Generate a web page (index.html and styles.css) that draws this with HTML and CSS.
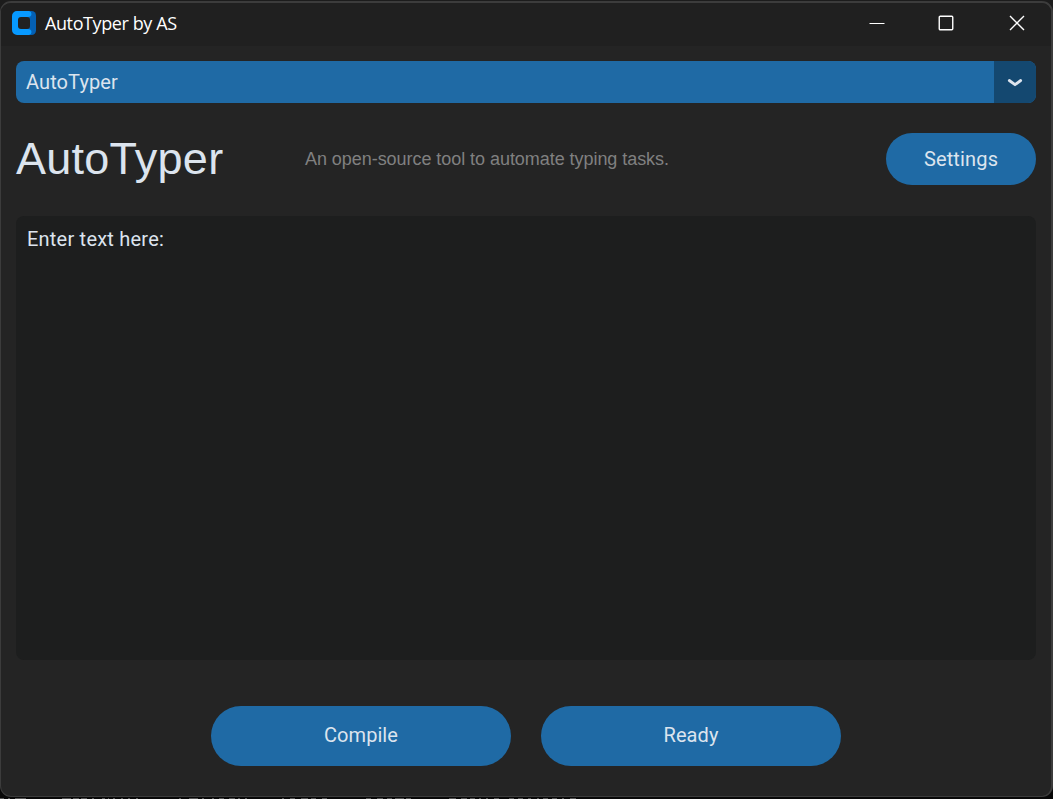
FILE: index.html
```
<!DOCTYPE html>
<html lang="en">
<head>
<meta charset="utf-8">
<title>AutoTyper by AS</title>
<link rel="stylesheet" href="styles.css">
</head>
<body>
<div class="window">
  <header class="titlebar">
    <svg class="logo" width="24" height="24" viewBox="0 0 24 24">
      <path fill="#0460b4" d="M15 0h4.500a4.500 4.500 0 0 1 4.500 4.500v15a4.500 4.500 0 0 1-4.500 4.500H15z"/>
      <path fill="#0799ff" d="M5 0h12a3 3 0 0 1 2.500 3c0 2-1.500 3-3.500 3H6v12h10c2 0 3.500 1 3.500 3a3 3 0 0 1-2.500 3H5a5 5 0 0 1-5-5V5a5 5 0 0 1 5-5z"/>
      <path fill="#0799ff" d="M5 5h4v4H5zM5 15h4v4H5z"/>
      <rect x="6" y="6" width="12" height="12" rx="3" fill="#212121"/>
    </svg>
    <span class="caption">AutoTyper by AS</span>
    <div class="controls">
      <svg width="16" height="16" viewBox="0 0 16 16"><path d="M.5 8.500h15"/></svg>
      <svg width="16" height="16" viewBox="0 0 16 16"><rect x="1.250" y="1.250" width="13.500" height="13.500" rx="1"/></svg>
      <svg width="16" height="16" viewBox="0 0 16 16"><path d="M1 1l14 14M15 1L1 15"/></svg>
    </div>
  </header>
  <main class="content">
    <div class="select">
      <span class="value">AutoTyper</span>
      <span class="arrow"><svg width="16" height="10" viewBox="0 0 16 10"><path d="M2.300 2.500L8 6.700l5.700-4.200"/></svg></span>
    </div>
    <div class="heading">
      <h1>AutoTyper</h1>
      <p>An open-source tool to automate typing tasks.</p>
      <button class="settings">Settings</button>
    </div>
    <div class="editor">Enter text here:</div>
    <div class="actions">
      <button>Compile</button>
      <button>Ready</button>
    </div>
  </main>
</div>
<svg class="backdrop" width="1053" height="1" viewBox="0 0 1053 1">
  <path d="M0 .5h4m4 0h2m5 0h11m36 0h9m2 0h6m2 0h6m5 0h2m8 0h3m3 0h1m4 0h2m6 0h2m5 0h2m6 0h2m41 0h2m8 0h9m4 0h2m8 0h2m5 0h5m5 0h6m3 0h2m5 0h2m35 0h2m6 0h5m6 0h7m3 0h5m6 0h5m39 0h5m6 0h6m4 0h5m3 0h9m2 0h5m38 0h7m5 0h6m3 0h5m4 0h2m5 0h2m6 0h5m10 0h5m4 0h5m5 0h3m6 0h2m4 0h5m4 0h5m5 0h2m6 0h6"/>
</svg>
</body>
</html>
```
FILE: styles.css
```
* { box-sizing: border-box; }
body {
  margin: 0;
  height: 799px;
  padding-top: 1px;
  overflow: hidden;
  background: linear-gradient(#1c1c1c 0 50%, #080808 50%);
  font-family: Roboto, sans-serif;
  font-size: 20px;
  color: #dce4ee;
}
.window {
  height: 796px;
  border: solid #3c3c3c;
  border-width: 2px 2px 1px 1px;
  border-radius: 11px;
  overflow: hidden;
  background: #242424;
}
.titlebar {
  display: flex;
  align-items: center;
  height: 43px;
  padding: 0 26px 3px 11px;
  background: #202020;
}
.logo { display: block; }
.caption {
  margin-left: 9px;
  font: 18px/24px "Open Sans", "Noto Sans", sans-serif;
  letter-spacing: -0.4px;
  color: #fff;
  white-space: nowrap;
}
.controls {
  display: flex;
  gap: 54px;
  margin-left: auto;
}
.controls svg { fill: none; stroke: #fff; stroke-width: 1.4; }
.controls svg:first-child { margin-right: -1px; stroke-width: 1; }
.controls svg:nth-child(2) { margin-right: 1px; }
.content { padding: 15px 15px 0; }
.select {
  display: flex;
  height: 42px;
  border-radius: 8px;
  overflow: hidden;
  background: #1f6aa5;
}
.value { flex: 1; padding-left: 10px; line-height: 42px; letter-spacing: 0.1px; }
.arrow {
  display: flex;
  align-items: center;
  justify-content: center;
  width: 42px;
  padding-top: 2px;
  background: #144870;
}
.arrow path {
  fill: none;
  stroke: #dce4ee;
  stroke-width: 2.8;
  stroke-linecap: round;
  stroke-linejoin: round;
}
.heading {
  display: flex;
  align-items: center;
  height: 52px;
  margin-top: 30px;
}
h1 {
  width: 289px;
  margin: 0;
  font: 45px/52px "Liberation Sans", Arial, sans-serif;
  letter-spacing: 0.25px;
}
p {
  margin: 0;
  font: 18px/52px "Liberation Sans", Arial, sans-serif;
  letter-spacing: -0.05px;
  color: #808080;
  white-space: nowrap;
}
button {
  width: 300px;
  height: 60px;
  padding: 0 0 2px;
  border: 0;
  border-radius: 30px;
  background: #1f6aa5;
  color: #dce4ee;
  font: inherit;
  letter-spacing: 0.05px;
}
.settings { width: 150px; height: 52px; padding: 0; margin-left: auto; border-radius: 26px; letter-spacing: 0.15px; }
.editor {
  height: 444px;
  margin-top: 31px;
  padding: 11px;
  border-radius: 8px;
  background: #1d1e1e;
  line-height: 24px;
  letter-spacing: 0.22px;
}
.actions {
  display: flex;
  justify-content: center;
  gap: 30px;
  margin-top: 46px;
}
.backdrop { display: block; margin-top: 1px; }
.backdrop path { stroke: #555; }
```
